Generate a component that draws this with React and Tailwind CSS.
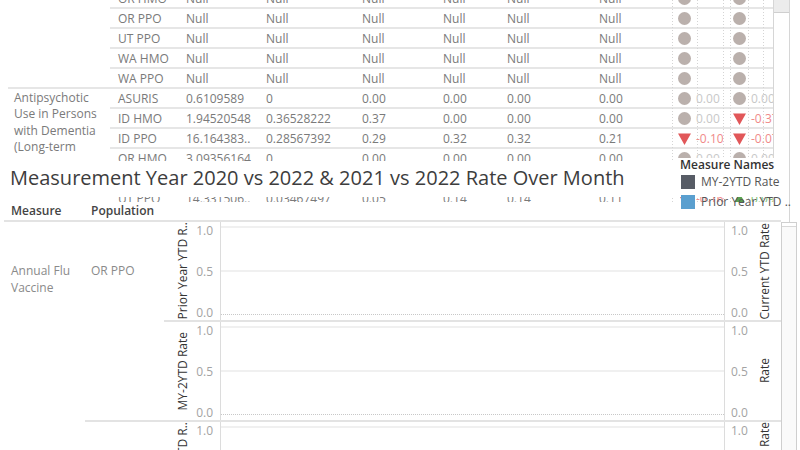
import React from "react";

const ROWS1 = [
  { p: "OR HMO", v: ["Null", "Null", "Null", "Null", "Null", "Null"], a: ["c", "", ""], b: ["c", "", ""] },
  { p: "OR PPO", v: ["Null", "Null", "Null", "Null", "Null", "Null"], a: ["c", "", ""], b: ["c", "", ""] },
  { p: "UT PPO", v: ["Null", "Null", "Null", "Null", "Null", "Null"], a: ["c", "", ""], b: ["c", "", ""] },
  { p: "WA HMO", v: ["Null", "Null", "Null", "Null", "Null", "Null"], a: ["c", "", ""], b: ["c", "", ""] },
  { p: "WA PPO", v: ["Null", "Null", "Null", "Null", "Null", "Null"], a: ["c", "", ""], b: ["c", "", ""] },
];

const ROWS2 = [
  { p: "ASURIS", v: ["0.6109589", "0", "0.00", "0.00", "0.00", "0.00"], a: ["c", "0.00", "g"], b: ["c", "0.00", "g"] },
  { p: "ID HMO", v: ["1.94520548", "0.36528222", "0.37", "0.00", "0.00", "0.00"], a: ["c", "0.00", "g"], b: ["d", "-0.37", "r"] },
  { p: "ID PPO", v: ["16.164383..", "0.28567392", "0.29", "0.32", "0.32", "0.21"], a: ["d", "-0.10", "r"], b: ["d", "-0.07", "r"] },
  { p: "OR HMO", v: ["3.09356164", "0", "0.00", "0.00", "0.00", "0.00"], a: ["c", "0.00", "g"], b: ["c", "0.00", "g"] },
  { p: "OR PPO", v: ["5.40273972", "0.18493151", "0.18", "0.21", "0.21", "0.17"], a: ["d", "-0.03", "r"], b: ["c", "0.00", "g"] },
  { p: "UT PPO", v: ["14.331506..", "0.03467497", "0.05", "0.14", "0.14", "0.11"], a: ["d", "-0.16", "r"], b: ["u", "0.09", "gr"] },
];

const COLW = ["w-[80px]", "w-[96px]", "w-[81px]", "w-[64px]", "w-[92px]", "w-[81px]"];

function Shape({ t }) {
  if (t === "c") return <span className="inline-block w-[13px] h-[13px] rounded-full bg-[#bab0ac] shrink-0" />;
  if (t === "d")
    return (
      <svg width="13" height="12" viewBox="0 0 13 12" className="shrink-0">
        <path d="M0 0.5 H13 L6.5 12 Z" fill="#e15759" />
      </svg>
    );
  if (t === "u")
    return (
      <svg width="13" height="12" viewBox="0 0 13 12" className="shrink-0">
        <path d="M0 11.5 H13 L6.5 0 Z" fill="#59a14f" />
      </svg>
    );
  return null;
}

function ShapeText({ text, c }) {
  if (!text) return null;
  if (c === "r") return <span className="text-[#f08a8a] whitespace-nowrap">{text}</span>;
  if (c === "gr") return <span className="text-[#7fbf73] whitespace-nowrap">{text}</span>;
  return <span className="text-[#c8c8c8] whitespace-nowrap">{text}</span>;
}

function Row({ r, last }) {
  return (
    <div
      className={
        last
          ? "flex h-[18px] items-center pt-[1px]"
          : "flex h-[20px] items-center pt-[1px] border-b-2 border-[#e6e6e6]"
      }
    >
      <div className="w-[68px] pl-[8px] whitespace-nowrap overflow-hidden">{r.p}</div>
      {r.v.map((v, i) => (
        <div key={i} className={`${COLW[i]} pl-[8px] whitespace-nowrap overflow-hidden`}>
          {v}
        </div>
      ))}
      <div className="w-[51px] h-full flex items-center pl-[6px] gap-[5px] overflow-hidden">
        <Shape t={r.a[0]} />
        <ShapeText text={r.a[1]} c={r.a[2]} />
      </div>
      <div className="w-[50px] h-full flex items-center pl-[10px] gap-[5px] overflow-hidden">
        <Shape t={r.b[0]} />
        <ShapeText text={r.b[1]} c={r.b[2]} />
      </div>
    </div>
  );
}

function Group({ label, rows }) {
  return (
    <div className="ml-[8px] flex border-b-2 border-[#e6e6e6]">
      <div className="w-[102px] pl-[6px] pt-[1px] leading-[16.3px] whitespace-nowrap">
        {label.map((l, i) => (
          <div key={i}>{l}</div>
        ))}
      </div>
      <div className="w-[663px] flex flex-col">
        {rows.map((r, i) => (
          <Row key={i} r={r} last={i === rows.length - 1} />
        ))}
      </div>
    </div>
  );
}

function TopSection() {
  return (
    <div className="h-[202px] overflow-hidden flex">
      <div className="relative w-[773px] h-full overflow-hidden text-[12px] text-[#7a7a7a]">
        <svg className="absolute top-0 left-[672px]" width="101" height="202">
          {[0.5, 25.5, 51.5, 58.5, 76.5, 91.5].map((x) => (
            <line key={x} x1={x} y1="0" x2={x} y2="202" stroke="#d4d4d4" strokeWidth="1" strokeDasharray="1 2" />
          ))}
        </svg>
        <div className="-mt-[11px]">
          <Group label={[]} rows={ROWS1} />
          <Group label={["Antipsychotic", "Use in Persons", "with Dementia", "(Long-term"]} rows={ROWS2} />
        </div>
      </div>
      <div className="w-[17px] h-full border-l border-r border-[#d6d6d6] bg-white">
        <div className="h-[13px] bg-[#ececec] border-b border-[#cfcfcf]" />
      </div>
    </div>
  );
}

function TitleBand() {
  return (
    <div className="absolute left-0 top-[161px] w-[675px] h-[36px] bg-white pl-[10px] pt-[3px]">
      <div className="text-[20px] leading-[28px] text-[#3d3d3d] whitespace-nowrap">
        Measurement Year 2020 vs 2022 &amp; 2021 vs 2022 Rate Over Month
      </div>
    </div>
  );
}

function Legend() {
  return (
    <div className="absolute left-[675px] top-[158px] w-[115px] h-[64px] border-r border-[#d6d6d6] pl-[5px] text-[12px] bg-[linear-gradient(to_bottom,#ffffff_39px,transparent_39px)]">
      <div className="leading-[13px] font-semibold text-[#333] whitespace-nowrap">Measure Names</div>
      <div className="flex flex-col">
        <div className="h-[20px] flex items-center gap-[6px] pl-[1px] pt-[1px]">
          <span className="w-[14px] h-[14px] bg-[#575c66] shrink-0" />
          <span className="text-[#555] whitespace-nowrap">MY-2YTD Rate</span>
        </div>
        <div className="h-[20px] flex items-center gap-[6px] pl-[1px] pt-[1px]">
          <span className="w-[14px] h-[14px] bg-[#5a9fcf] shrink-0" />
          <span className="text-[#555] whitespace-nowrap">Prior Year YTD ..</span>
        </div>
      </div>
    </div>
  );
}

function ChartGrid() {
  return (
    <svg width="503" height="98" className="block">
      <line x1="0" y1="5" x2="503" y2="5" stroke="#f0f0f0" strokeWidth="2" />
      <line x1="0" y1="49" x2="503" y2="49" stroke="#f0f0f0" strokeWidth="2" />
      <line x1="0" y1="92.5" x2="503" y2="92.5" stroke="#c8c8c8" strokeWidth="1" strokeDasharray="1 1" />
    </svg>
  );
}

function Ticks({ right }) {
  return (
    <div
      className={
        right
          ? "w-[33px] h-[98px] flex flex-col justify-between pl-[6px] pt-[2px] text-[12px] leading-[14px] text-[#a3a3a3]"
          : "w-[30px] h-[98px] flex flex-col justify-between items-end pr-[7px] pt-[2px] text-[12px] leading-[14px] text-[#a3a3a3]"
      }
    >
      <span>1.0</span>
      <span>0.5</span>
      <span>0.0</span>
    </div>
  );
}

function AxisTitle({ text, align }) {
  const cls =
    align === "start"
      ? "h-[98px] flex flex-col justify-start overflow-hidden"
      : "h-[98px] flex flex-col justify-center overflow-hidden";
  return (
    <div className={cls}>
      <span className="[writing-mode:vertical-rl] rotate-180 text-[12px] leading-[14px] text-[#333] whitespace-nowrap">
        {text}
      </span>
    </div>
  );
}

function Pane({ left, right, align, border }) {
  return (
    <div className={border ? "flex h-[100px] border-b-2 border-[#e3e3e3]" : "flex h-[98px]"}>
      <div className="w-[56px] flex pl-[12px]">
        <div className="w-[14px]">
          <AxisTitle text={left} align={align} />
        </div>
        <Ticks />
      </div>
      <div className="w-[504px] border-l border-[#dcdcdc]">
        <ChartGrid />
      </div>
      <div className="w-[57px] flex border-l border-[#dcdcdc]">
        <Ticks right />
        <div className="w-[14px]">
          <AxisTitle text={right} align={align} />
        </div>
      </div>
    </div>
  );
}

function LowerSection() {
  return (
    <div className="flex h-[248px]">
      <div className="w-[781px] flex flex-col">
        <div className="h-[20px] ml-[4px] w-[777px] border-b-2 border-[#e3e3e3] flex items-center text-[12px] font-semibold text-[#444]">
          <span className="w-[81px] pl-[7px]">Measure</span>
          <span className="pl-[6px]">Population</span>
        </div>
        <div className="flex text-[12px] text-[#8a8a8a]">
          <div className="w-[85px] pl-[11px] pt-[40px] leading-[17px]">
            <div>Annual Flu</div>
            <div>Vaccine</div>
          </div>
          <div className="w-[696px] flex flex-col">
            <div className="flex border-b-2 border-[#e3e3e3]">
              <div className="w-[79px] pl-[6px] pt-[40px] leading-[17px] whitespace-nowrap">OR PPO</div>
              <div className="w-[617px] flex flex-col">
                <Pane left="Prior Year YTD R.." right="Current YTD Rate" align="center" border />
                <Pane left="MY-2YTD Rate" right="Rate" align="center" />
              </div>
            </div>
            <div className="flex">
              <div className="w-[79px]" />
              <div className="w-[617px] flex flex-col">
                <Pane left="Current YTD R.." right="Rate" align="start" />
              </div>
            </div>
          </div>
        </div>
      </div>
      <div className="w-[16px] mt-[20px] border-l border-r border-t border-[#cfcfcf]">
        <div className="mt-[3px] h-full border-t border-[#d8d8d8] bg-[#fafafa]" />
      </div>
    </div>
  );
}

export default function App() {
  return (
    <div className="relative w-[800px] h-[450px] overflow-hidden bg-white font-['Open_Sans',sans-serif]">
      <TopSection />
      <LowerSection />
      <TitleBand />
      <Legend />
    </div>
  );
}
